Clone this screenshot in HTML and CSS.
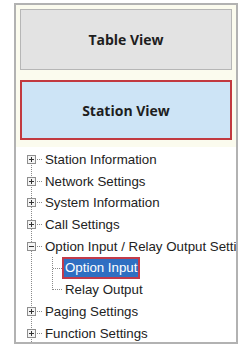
FILE: index.html
```html
<!DOCTYPE html>
<html lang="en">
<head>
    <meta charset="UTF-8">
    <meta name="viewport" content="width=device-width, initial-scale=1.0">
    <title>Station View</title>
    <link rel="stylesheet" href="styles.css">
</head>
<body>
    <div class="panel">
        <div class="view-buttons">
            <button class="view-btn">Table View</button>
            <button class="view-btn active">Station View</button>
        </div>

        <div class="tree">
            <ul class="tree-list">
                <li class="node">
                    <svg class="toggle" width="9" height="9" viewBox="0 0 9 9"><rect x="0.5" y="0.5" width="8" height="8" fill="#f4f4f4" stroke="#8e8e8e"/><path d="M2 4.5h5M4.5 2v5" stroke="#333" stroke-width="1"/></svg>
                    <span class="dash"></span>
                    <span class="label">Station Information</span>
                </li>
                <li class="node">
                    <svg class="toggle" width="9" height="9" viewBox="0 0 9 9"><rect x="0.5" y="0.5" width="8" height="8" fill="#f4f4f4" stroke="#8e8e8e"/><path d="M2 4.5h5M4.5 2v5" stroke="#333" stroke-width="1"/></svg>
                    <span class="dash"></span>
                    <span class="label">Network Settings</span>
                </li>
                <li class="node">
                    <svg class="toggle" width="9" height="9" viewBox="0 0 9 9"><rect x="0.5" y="0.5" width="8" height="8" fill="#f4f4f4" stroke="#8e8e8e"/><path d="M2 4.5h5M4.5 2v5" stroke="#333" stroke-width="1"/></svg>
                    <span class="dash"></span>
                    <span class="label">System Information</span>
                </li>
                <li class="node">
                    <svg class="toggle" width="9" height="9" viewBox="0 0 9 9"><rect x="0.5" y="0.5" width="8" height="8" fill="#f4f4f4" stroke="#8e8e8e"/><path d="M2 4.5h5M4.5 2v5" stroke="#333" stroke-width="1"/></svg>
                    <span class="dash"></span>
                    <span class="label">Call Settings</span>
                </li>
                <li class="node">
                    <svg class="toggle" width="9" height="9" viewBox="0 0 9 9"><rect x="0.5" y="0.5" width="8" height="8" fill="#f4f4f4" stroke="#8e8e8e"/><path d="M2 4.5h5" stroke="#333" stroke-width="1"/></svg>
                    <span class="dash"></span>
                    <span class="label">Option Input / Relay Output Settings</span>
                </li>
                <li>
                    <ul class="sub-list">
                        <li class="node child">
                            <span class="dash long"></span>
                            <span class="label selected">Option Input</span>
                        </li>
                        <li class="node child">
                            <span class="dash long"></span>
                            <span class="label">Relay Output</span>
                        </li>
                    </ul>
                </li>
                <li class="node">
                    <svg class="toggle" width="9" height="9" viewBox="0 0 9 9"><rect x="0.5" y="0.5" width="8" height="8" fill="#f4f4f4" stroke="#8e8e8e"/><path d="M2 4.5h5M4.5 2v5" stroke="#333" stroke-width="1"/></svg>
                    <span class="dash"></span>
                    <span class="label">Paging Settings</span>
                </li>
                <li class="node">
                    <svg class="toggle" width="9" height="9" viewBox="0 0 9 9"><rect x="0.5" y="0.5" width="8" height="8" fill="#f4f4f4" stroke="#8e8e8e"/><path d="M2 4.5h5M4.5 2v5" stroke="#333" stroke-width="1"/></svg>
                    <span class="dash"></span>
                    <span class="label">Function Settings</span>
                </li>
            </ul>
        </div>
    </div>
</body>
</html>
```

FILE: styles.css
```css
body {
    margin: 0;
    background-color: #ffffff;
    font-family: "Liberation Sans", Arial, sans-serif;
}

.panel {
    box-sizing: border-box;
    width: 224px;
    height: 341px;
    margin: 3px 0 0 14px;
    border: 2px solid #b2b2b2;
    background-color: #fbfbee;
    display: flex;
    flex-direction: column;
}

.view-buttons {
    padding: 4px 4px 0 4px;
    display: flex;
    flex-direction: column;
    gap: 10px;
}

.view-btn {
    box-sizing: border-box;
    width: 100%;
    height: 61px;
    background-color: #e3e3e3;
    border: 1px solid #b6b6b6;
    font-family: "Open Sans", sans-serif;
    font-weight: 700;
    font-size: 14px;
    color: #1e1e1e;
    padding: 0;
}

.view-btn.active {
    height: 60px;
    background-color: #cde4f6;
    border: 2px solid #c2393f;
}

.tree {
    flex-grow: 1;
    margin-top: 7px;
    background-color: #ffffff;
    overflow: hidden;
}

.tree-list {
    list-style: none;
    margin: 0;
    padding: 1.5px 0 0 11px;
    height: 100%;
    background-image: repeating-linear-gradient(to bottom, #8a8a8a 0 1px, transparent 1px 2px);
    background-size: 1px 100%;
    background-position: 15px 18px;
    background-repeat: no-repeat;
}

.sub-list {
    list-style: none;
    margin: 0;
    padding: 0;
    background-image: repeating-linear-gradient(to bottom, #8a8a8a 0 1px, transparent 1px 2px);
    background-size: 1px 33px;
    background-position: 25px 0;
    background-repeat: no-repeat;
}

.node {
    height: 21.75px;
    display: flex;
    align-items: center;
    white-space: nowrap;
    font-size: 13.3px;
    color: #222;
}

.toggle {
    flex-shrink: 0;
    display: block;
}

.dash {
    width: 5px;
    margin: 0 3px 0 1px;
    border-top: 1px dotted #8a8a8a;
    flex-shrink: 0;
}

.child {
    padding-left: 26px;
}

.dash.long {
    width: 9px;
    margin: 0;
}

.child .label {
    padding: 0 1px;
    border: 2px solid transparent;
    line-height: 18px;
}

.label.selected {
    background-color: #2f6fc2;
    border-color: #c23a4a;
    color: #ffffff;
}
```
